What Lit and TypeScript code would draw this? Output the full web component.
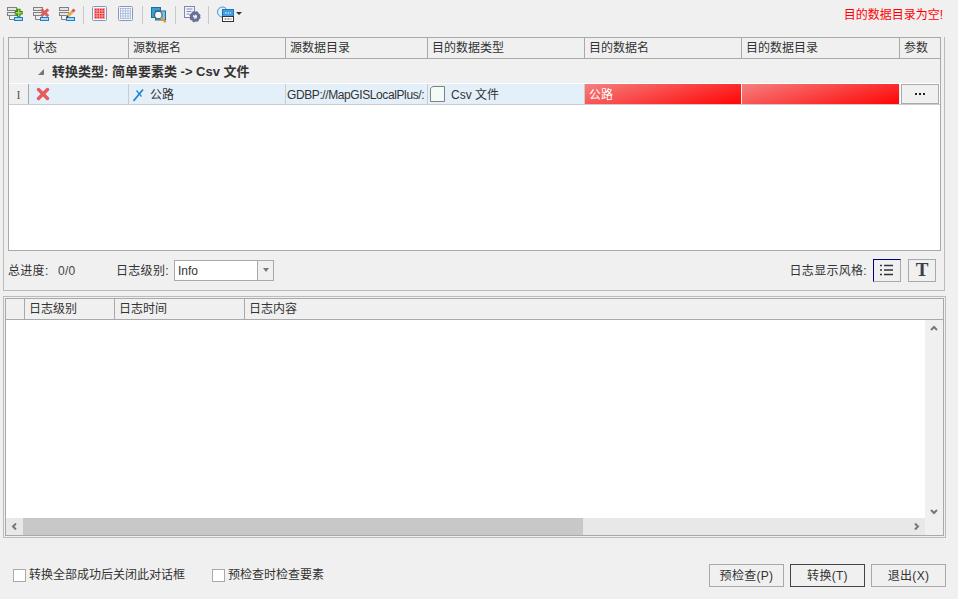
import { LitElement, html, css, svg } from "lit";
import { customElement } from "lit/decorators.js";

const topCols = ["", "状态", "源数据名", "源数据目录", "目的数据类型", "目的数据名", "目的数据目录", "参数"];
const logCols = ["", "日志级别", "日志时间", "日志内容"];

const base = svg`<rect x="0.5" y="1.5" width="9" height="3" fill="#e6e6e6" stroke="#808080"/><rect x="0.5" y="6.5" width="9" height="3" fill="#e6e6e6" stroke="#808080"/><path d="M2.500 10v3.500h5" fill="none" stroke="#808080"/><rect x="7.500" y="11.500" width="8" height="3" fill="#a6daf8" stroke="#1b7fc9"/>`;

@customElement("app-root")
export class AppRoot extends LitElement {
  static styles = css`
    :host { display: block; width: 958px; height: 599px; background: #f0f0f0; color: #333; overflow: hidden;
      font: 12px/16px "Liberation Sans", "Noto Sans CJK SC", sans-serif; }
    * { box-sizing: border-box; }
    .toolbar { height: 37px; display: flex; align-items: center; padding: 0 6px 7px 7px; gap: 8px; }
    .toolbar svg { display: block; flex: none; }
    .sep { width: 1px; height: 18px; background: #c8c8c8; margin-left: -2px; }
    .caret { width: 0; height: 0; border: 3px solid transparent; border-top: 3px solid #333; border-bottom: 0; margin: 0 0 4px -7px; }
    .error { margin-left: auto; color: #f00; margin-right: 9px; }
    .upper { margin: 0 13px 0 3px; height: 254px; border: 1px solid #bbb; border-top: 0; padding: 0 3px 0 4px; }
    .table { border: 1px solid #a9a9a9; height: 214px; background: #fff; }
    .head { display: grid; height: 21px; background: #f0f0f0; border-bottom: 1px solid #a9a9a9; }
    .top, .row { grid-template-columns: 20px 100px 157px 142px 157px 157px 158px 40px; }
    .head > div, .row > div { border-right: 1px solid #a9a9a9; padding-left: 4px; white-space: nowrap; overflow: hidden; line-height: 20px; }
    .head > div:last-child { border-right: 0; }
    .group { height: 25px; background: #f0f0f0; display: flex; align-items: center; gap: 8px; padding: 2px 0 0 29px; font-size: 13px; font-weight: bold; border-bottom: 1px solid #fff; }
    .tri { width: 0; height: 0; border-left: 6px solid transparent; border-bottom: 6px solid #777; }
    .row { display: grid; height: 21px; border-bottom: 1px solid #ccc; }
    .row > div { background: #e4f0f9; border-right: 1px solid #ccc; line-height: 20px; display: flex; align-items: center; gap: 3px; padding-top: 1px; }
    .row > .hdr { background: #f0f0f0; padding-left: 0; justify-content: center; color: #555; border-right-color: #a9a9a9; font-family: "Liberation Serif", serif; }
    .row > .st { padding-left: 7px; padding-top: 0; }
    .row > .path { padding-left: 1px; letter-spacing: -0.4px; }
    .row > .dtype { padding-left: 2px; gap: 6px; padding-top: 0; }
    .row > .dtype span { padding-top: 1px; }
    .row > .red { color: #fff; padding-left: 4px; border-right: 1px solid #eee; background: linear-gradient(165deg, #f58080, #ff0a0a 95%); }
    .row > .param { background: #fff; border: 0; padding: 0 1px 0 1px; }
    .dots { width: 100%; height: 20px; background: #f0f0f0; border: 1px solid #a9a9a9; display: flex; justify-content: center; align-items: center; gap: 2px; }
    .dots i { width: 2px; height: 2px; background: #222; }
    .status { height: 38px; display: flex; align-items: center; }
    .status > span { padding-top: 2px; letter-spacing: 0.3px; }
    .status .prog { width: 50px; }
    .status .val { width: 58px; color: #444; }
    .status .lvl { width: 58px; }
    .combo { width: 100px; height: 21px; background: #fff; border: 1px solid #a9a9a9; display: flex; align-items: center; padding-left: 3px; }
    .combo > span:first-child { padding-top: 1px; }
    .combo .arrow { margin-left: auto; width: 16px; height: 100%; background: #f0f0f0; border-left: 1px solid #a9a9a9; display: flex; align-items: center; justify-content: center; }
    .combo .arrow i { border: 3.500px solid transparent; border-top: 4px solid #777; border-bottom: 0; }
    .status .style-label { margin-left: auto; }
    .sbtn { width: 28px; height: 23px; border: 1px solid #a9a9a9; background: #f0f0f0; display: flex; align-items: center; justify-content: center; }
    .sbtn.on { border-top-color: #00007f; border-left-color: #00007f; margin-left: 6px; }
    .sbtn + .sbtn { margin-left: 7px; margin-right: 5px; }
    .t { font: bold 19px/20px "Liberation Serif", serif; color: #3b3f4a; }
    .lower { margin: 5px 12px 0 3px; height: 242px; border: 1px solid #bbb; padding: 1px; }
    .ltable { height: 238px; border: 1px solid #a9a9a9; background: #fff; display: flex; flex-direction: column; }
    .log { grid-template-columns: 19px 90px 130px 1fr; flex: none; height: 21px; }
    .body { flex: 1; display: grid; grid-template-columns: 1fr 18px; grid-template-rows: 1fr 17px; min-height: 0; }
    .vbar { background: #f0f0f0; display: flex; flex-direction: column; justify-content: space-between; align-items: center; padding: 5px 0 3px; }
    .hbar { background: #e8e8e8; position: relative; }
    .thumb { height: 100%; background: #c8c8c8; width: 560px; margin-left: 17px; }
    .hbar span { position: absolute; top: 5px; display: flex; }
    .hbar .lft { left: 5px; }
    .hbar .rgt { right: 5px; }
    .corner { background: #f0f0f0; }
    .foot { height: 61px; display: flex; align-items: center; padding: 13px 12px 0 13px; }
    .check { display: flex; align-items: center; gap: 3px; }
    .check i { width: 13px; height: 13px; background: #fff; border: 1px solid #a9a9a9; display: block; }
    .check + .check { margin-left: 27px; }
    .btns { margin-left: auto; display: flex; gap: 6px; padding-top: 1px; }
    .btn { width: 75px; height: 23px; border: 1px solid #a9a9a9; background: #f0f0f0; text-align: center; line-height: 22px; letter-spacing: 0.3px; }
    .btn.def { border-color: #444; }
  `;

  private icon(content: unknown) {
    return html`<svg width="18" height="18" viewBox="0 0 18 18">${content}</svg>`;
  }

  private chev(d: string) {
    return html`<svg width="8" height="7" viewBox="0 0 8 7"><path d=${d} fill="none" stroke="#777" stroke-width="2"/></svg>`;
  }

  private gridIcon(frame: string, fill: string, line: string) {
    return this.icon(svg`<rect x="0.500" y="0.500" width="14" height="14" rx="1" fill="#f4f7fb" stroke="${frame}"/><rect x="2.500" y="2.500" width="10" height="10" fill="${fill}" stroke="${line}"/><path d="M5 2.500v10M7.500 2.500v10M10 2.500v10M2.500 5h10M2.500 7.500h10M2.500 10h10" stroke="${line}"/>`);
  }

  render() {
    return html`
      <div class="toolbar">
        ${this.icon(svg`${base}<path d="M11.700 2.700v8M7.700 6.700h8" stroke="#2c7a12" stroke-width="3.600"/><path d="M11.700 3.500v6.400M8.500 6.700h6.400" stroke="#9ae23c" stroke-width="1.600"/>`)}
        ${this.icon(svg`${base}<path d="M8.200 3.200l7 7M15.200 3.200l-7 7" stroke="#d9605c" stroke-width="3"/>`)}
        ${this.icon(svg`${base}<path d="M8.500 10.500l5-5" stroke="#e8b04a" stroke-width="3"/><path d="M13.500 5.500l2-2" stroke="#d9534f" stroke-width="3"/><path d="M7.500 11.500l1.500-1.500" stroke="#333" stroke-width="1.500"/>`)}
        <span class="sep"></span>
        ${this.gridIcon("#7d9bc0", "#e8262a", "#f8a0a0")}
        ${this.gridIcon("#8f93b8", "#fff", "#a9bede")}
        <span class="sep"></span>
        ${this.icon(svg`<rect x="0.500" y="1.500" width="9" height="10" fill="#2fa3d8" stroke="#1c6f9d"/><rect x="4.500" y="5" width="10" height="9" fill="#79c6e8" stroke="#1c6f9d"/><circle cx="7.300" cy="9" r="3.800" fill="#eef7fb" stroke="#555" stroke-width="1.200"/><path d="M10 11.700l4.700 4.500" stroke="#e39a2d" stroke-width="2"/>`)}
        <span class="sep"></span>
        ${this.icon(svg`<rect x="0.500" y="0.500" width="10" height="11" fill="#f3f5fb" stroke="#7d86b0"/><path d="M2.500 3h6M2.500 5.500h5M2.500 8h3" stroke="#7d86b0"/><circle cx="11" cy="10.700" r="3.600" fill="none" stroke="#6a6e98" stroke-width="3"/><circle cx="11" cy="10.700" r="1.200" fill="#eee"/><circle cx="11" cy="10.700" r="5" fill="none" stroke="#6a6e98" stroke-width="1.200" stroke-dasharray="2 2"/>`)}
        <span class="sep"></span>
        ${this.icon(svg`<circle cx="5.500" cy="6" r="5" fill="#e2f1fb" stroke="#3a92d8"/><rect x="5.500" y="3.500" width="11" height="7" fill="#3f9ee0" stroke="#2277b8"/><path d="M8 7h6" stroke="#fff" stroke-dasharray="1.500 1"/><rect x="5.500" y="10.500" width="11" height="5" fill="#fff" stroke="#333"/><path d="M7.500 13h7" stroke="#555" stroke-dasharray="2 1"/>`)}
        <span class="caret"></span>
        <span class="error">目的数据目录为空!</span>
      </div>

      <div class="upper">
        <div class="table">
          <div class="head top">${topCols.map((c) => html`<div>${c}</div>`)}</div>
          <div class="group"><span class="tri"></span><span>转换类型: 简单要素类 -> Csv 文件</span></div>
          <div class="row">
            <div class="hdr">I</div>
            <div class="st"><svg width="14" height="14" viewBox="0 0 14 14"><path d="M2.500 2.500l9 9M11.500 2.500l-9 9" stroke="#e85a5c" stroke-width="3.500" stroke-linecap="round"/></svg></div>
            <div><svg width="13" height="14" viewBox="0 0 13 14" style="margin-right:1px"><path d="M0.500 13L10 1.500" stroke="#1f86d8" stroke-width="1.800" fill="none"/><path d="M3.500 2.500l5 6" stroke="#1f86d8" stroke-width="1.200" fill="none"/></svg><span>公路</span></div>
            <div class="path">GDBP://MapGISLocalPlus/:</div>
            <div class="dtype"><svg width="15" height="16" viewBox="0 0 15 16"><path d="M.5 2.500L3 .5h11.500v15H.5z" fill="#f4faf8" stroke="#808080"/></svg><span>Csv 文件</span></div>
            <div class="red">公路</div>
            <div class="red"></div>
            <div class="param"><span class="dots"><i></i><i></i><i></i></span></div>
          </div>
        </div>
        <div class="status">
          <span class="prog">总进度:</span><span class="val">0/0</span>
          <span class="lvl">日志级别:</span>
          <div class="combo"><span>Info</span><span class="arrow"><i></i></span></div>
          <span class="style-label">日志显示风格:</span>
          <div class="sbtn on"><svg width="16" height="12" viewBox="0 0 16 12"><path d="M1 1.500h2M1 6h2M1 10.500h2M5 1.500h9M5 6h9M5 10.500h9" stroke="#333" stroke-width="1.500"/></svg></div>
          <div class="sbtn"><span class="t">T</span></div>
        </div>
      </div>

      <div class="lower">
        <div class="ltable">
          <div class="head log">${logCols.map((c) => html`<div>${c}</div>`)}</div>
          <div class="body">
            <div></div>
            <div class="vbar">${this.chev("M1 5l3-3 3 3")}${this.chev("M1 2l3 3 3-3")}</div>
            <div class="hbar"><span class="lft">${this.chev("M5 0.500L2 3.500l3 3")}</span><div class="thumb"></div><span class="rgt">${this.chev("M3 0.500l3 3-3 3")}</span></div>
            <div class="corner"></div>
          </div>
        </div>
      </div>

      <div class="foot">
        <label class="check"><i></i><span>转换全部成功后关闭此对话框</span></label>
        <label class="check"><i></i><span>预检查时检查要素</span></label>
        <div class="btns">
          <div class="btn">预检查(P)</div>
          <div class="btn def">转换(T)</div>
          <div class="btn">退出(X)</div>
        </div>
      </div>
    `;
  }
}
